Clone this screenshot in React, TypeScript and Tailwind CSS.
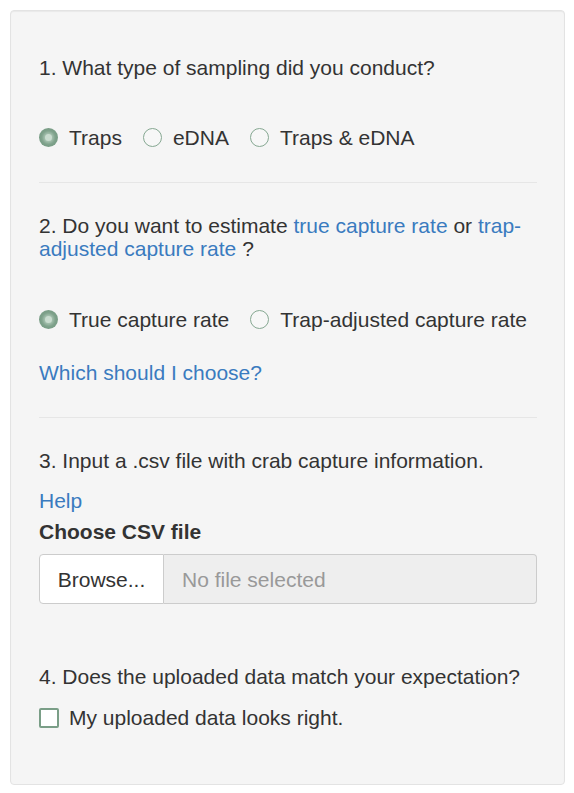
import React from "react";

function Radio({ checked, label }: { checked?: boolean; label: string }) {
  return (
    <div className="flex items-center gap-[11px]">
      {checked ? (
        <span className="block w-[19px] h-[19px] rounded-full bg-[#7a9e87] flex items-center justify-center">
          <span className="block w-[7px] h-[7px] rounded-full bg-[#c9dccf] shadow-[0_0_3px_2px_#a9c4b2]" />
        </span>
      ) : (
        <span className="block w-[19px] h-[19px] rounded-full border border-[#86a892] bg-[#f7f7f7]" />
      )}
      <span>{label}</span>
    </div>
  );
}

export default function App() {
  return (
    <div
      className="pt-[10px] pl-[10px] text-[21px] leading-[23px] text-[#333333]"
      style={{ fontFamily: '"Liberation Sans", Arial, sans-serif' }}
    >
      <div className="w-[555px] h-[775px] bg-[#f5f5f5] border border-[#e3e3e3] rounded-[4px] shadow-[inset_0_1px_1px_rgba(0,0,0,0.05)] pl-[28px] pr-[27px] pt-[45px]">
        <div>1. What type of sampling did you conduct?</div>
        <div className="mt-[47px] flex items-center gap-[21px]">
          <Radio checked label="Traps" />
          <Radio label="eDNA" />
          <Radio label="Traps & eDNA" />
        </div>
        <div className="mt-[33px] border-t border-[#e6e6e6]" />
        <div className="mt-[31px]">
          2. Do you want to estimate <span className="text-[#3a7bbf]">true capture rate</span> or{" "}
          <span className="text-[#3a7bbf]">trap-adjusted capture rate</span> ?
        </div>
        <div className="mt-[48px] flex items-center gap-[21px]">
          <Radio checked label="True capture rate" />
          <Radio label="Trap-adjusted capture rate" />
        </div>
        <div className="mt-[30px] text-[#3a7bbf]">Which should I choose?</div>
        <div className="mt-[33px] border-t border-[#e6e6e6]" />
        <div className="mt-[31px]">3. Input a .csv file with crab capture information.</div>
        <div className="mt-[17px] text-[#3a7bbf]">Help</div>
        <div className="mt-[8px] font-bold">Choose CSV file</div>
        <div className="mt-[11px] flex h-[50px]">
          <div className="w-[125px] bg-white border border-[#cccccc] rounded-l-[4px] flex items-center justify-center">
            Browse...
          </div>
          <div className="flex-1 bg-[#eeeeee] border border-l-0 border-[#cccccc] rounded-r-[4px] flex items-center pl-[18px] text-[#999999]">
            No file selected
          </div>
        </div>
        <div className="mt-[61px]">4. Does the uploaded data match your expectation?</div>
        <div className="mt-[18px] flex items-center gap-[10px]">
          <span className="block w-[20px] h-[20px] bg-white border-2 border-[#7a9e87] rounded-[2px]" />
          <span>My uploaded data looks right.</span>
        </div>
      </div>
    </div>
  );
}
